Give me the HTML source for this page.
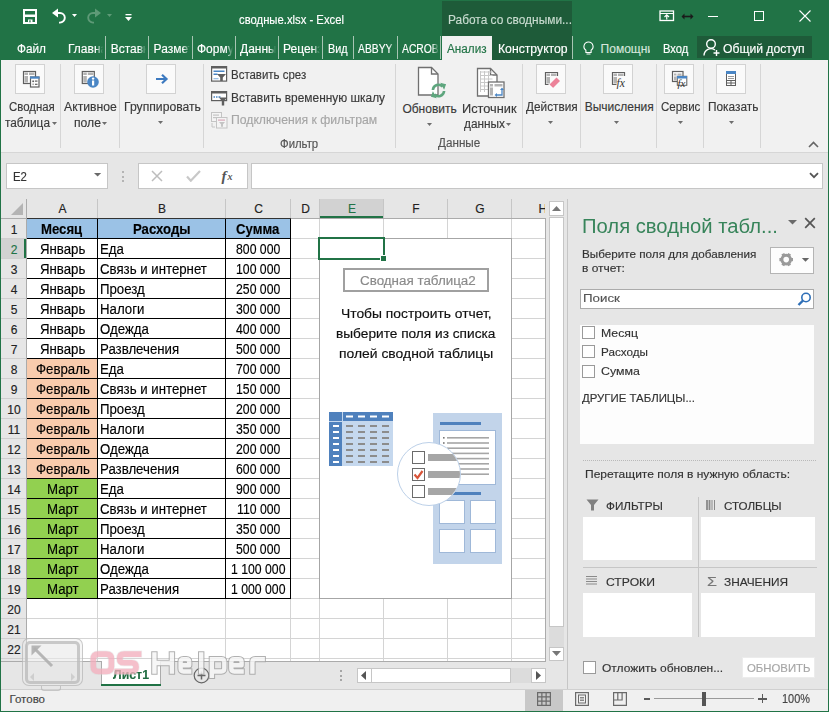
<!DOCTYPE html><html><head><meta charset="utf-8"><style>
html,body{margin:0;padding:0;}
body{width:829px;height:712px;position:relative;overflow:hidden;background:#217346;font-family:"Liberation Sans",sans-serif;}
.a{position:absolute;}
.t{position:absolute;white-space:pre;-webkit-text-stroke:0.15px currentColor;}
</style></head><body>

<div class="a" style="left:442px;top:1px;width:130px;height:59px;background:#1e5b39;"></div>
<svg class="a" style="left:22px;top:8px;" width="16" height="16" viewBox="0 0 16 16"><path d="M2 2h12v13H2z" fill="none" stroke="#fff" stroke-width="2"/><rect x="2" y="6.5" width="12" height="2.5" fill="#fff"/><rect x="6" y="11.5" width="4.5" height="3.5" fill="#fff"/><rect x="7.3" y="12.3" width="1.3" height="2" fill="#217346"/></svg>
<svg class="a" style="left:51px;top:8px;" width="28" height="16" viewBox="0 0 28 16"><path d="M1 5l6-4.5v9z" fill="#fff"/><path d="M6 5h3a4.8 4.8 0 0 1 0 9.6H8" fill="none" stroke="#fff" stroke-width="1.9"/><path d="M21 6h5l-2.5 3z" fill="#fff"/></svg>
<svg class="a" style="left:86px;top:8px;" width="28" height="16" viewBox="0 0 28 16"><path d="M15 5l-6-4.5v9z" fill="#5e9a77"/><path d="M10 5H7a4.8 4.8 0 0 0 0 9.6h1" fill="none" stroke="#5e9a77" stroke-width="1.9"/><path d="M21 6h5l-2.5 3z" fill="#5e9a77"/></svg>
<svg class="a" style="left:124px;top:13px;" width="9" height="9" viewBox="0 0 9 9"><rect x="1.5" y="1" width="6" height="1.3" fill="#fff"/><path d="M1 4h7l-3.5 4z" fill="#fff"/></svg>
<div class="t" style="left:239.00px;top:13.84px;font-size:12px;line-height:12px;color:#fff;transform:scaleX(0.9406);transform-origin:0 0;">сводные.xlsx - Excel</div>
<div class="t" style="left:447.80px;top:13.84px;font-size:12px;line-height:12px;color:#c9dcd0;transform:scaleX(0.9922);transform-origin:0 0;">Работа со сводными...</div>
<svg class="a" style="left:659px;top:10px;" width="16" height="12" viewBox="0 0 16 12"><rect x="1" y="1" width="13.5" height="9.5" fill="none" stroke="#fff" stroke-width="1.3"/><path d="M1 3.5h13.5" stroke="#fff" stroke-width="1"/><path d="M7.75 9.5V5M5.5 7l2.25-2.25L10 7" fill="none" stroke="#fff" stroke-width="1.2"/></svg>
<svg class="a" style="left:681px;top:12px;" width="13" height="9" viewBox="0 0 13 9"><path d="M2 4.5h9" stroke="#1a1a1a" stroke-width="1.6"/><path d="M0.5 4.5l3-3v6zM12.5 4.5l-3-3v6z" fill="#1a1a1a"/></svg>
<div class="a" style="left:708px;top:16px;width:10px;height:1px;background:#fff;"></div>
<div class="a" style="left:754px;top:11px;width:10px;height:10px;box-sizing:border-box;border:1px solid #fff;"></div>
<svg class="a" style="left:799px;top:10px;" width="12" height="12" viewBox="0 0 12 12"><path d="M0.5 0.5l11 11M11.5 0.5l-11 11" stroke="#fff" stroke-width="1.1"/></svg>
<div class="a" style="left:105px;top:36px;width:1px;height:23px;background:#a7c5b3;"></div>
<div class="a" style="left:148px;top:36px;width:1px;height:23px;background:#a7c5b3;"></div>
<div class="a" style="left:192px;top:36px;width:1px;height:23px;background:#a7c5b3;"></div>
<div class="a" style="left:235px;top:36px;width:1px;height:23px;background:#a7c5b3;"></div>
<div class="a" style="left:278px;top:36px;width:1px;height:23px;background:#a7c5b3;"></div>
<div class="a" style="left:322px;top:36px;width:1px;height:23px;background:#a7c5b3;"></div>
<div class="a" style="left:353px;top:36px;width:1px;height:23px;background:#a7c5b3;"></div>
<div class="a" style="left:397px;top:36px;width:1px;height:23px;background:#a7c5b3;"></div>
<div class="a" style="left:440px;top:36px;width:1px;height:23px;background:#a7c5b3;"></div>
<div class="a" style="left:572px;top:36px;width:1px;height:23px;background:#a7c5b3;"></div>
<div class="a" style="left:442px;top:36px;width:50px;height:24px;background:#f1f1f1;"></div>
<div class="a" style="left:697px;top:36px;width:115px;height:22px;background:#1e5b39;"></div>
<div class="t" style="left:16.50px;top:42.84px;font-size:12px;line-height:12px;color:#fff;transform:scaleX(0.9812);transform-origin:0 0;">Файл</div>
<div class="a" style="left:67px;top:0;width:36px;height:712px;overflow:hidden;-webkit-mask-image:linear-gradient(90deg,#000 calc(100% - 7px),transparent)"><div class="t" style="left:1.00px;top:42.84px;font-size:12px;line-height:12px;color:#fff;">Главная</div></div>
<div class="a" style="left:109.7px;top:0;width:36.3px;height:712px;overflow:hidden;-webkit-mask-image:linear-gradient(90deg,#000 calc(100% - 7px),transparent)"><div class="t" style="left:1.00px;top:42.84px;font-size:12px;line-height:12px;color:#fff;">Вставка</div></div>
<div class="a" style="left:152.6px;top:0;width:37.400000000000006px;height:712px;overflow:hidden;-webkit-mask-image:linear-gradient(90deg,#000 calc(100% - 7px),transparent)"><div class="t" style="left:1.00px;top:42.84px;font-size:12px;line-height:12px;color:#fff;">Разметка</div></div>
<div class="a" style="left:196px;top:0;width:37px;height:712px;overflow:hidden;-webkit-mask-image:linear-gradient(90deg,#000 calc(100% - 7px),transparent)"><div class="t" style="left:1.00px;top:42.84px;font-size:12px;line-height:12px;color:#fff;">Формулы</div></div>
<div class="a" style="left:239px;top:0;width:37px;height:712px;overflow:hidden;-webkit-mask-image:linear-gradient(90deg,#000 calc(100% - 7px),transparent)"><div class="t" style="left:1.00px;top:42.84px;font-size:12px;line-height:12px;color:#fff;">Данные</div></div>
<div class="a" style="left:282px;top:0;width:38px;height:712px;overflow:hidden;-webkit-mask-image:linear-gradient(90deg,#000 calc(100% - 7px),transparent)"><div class="t" style="left:1.00px;top:42.84px;font-size:12px;line-height:12px;color:#fff;">Рецензирование</div></div>
<div class="t" style="left:328.20px;top:42.84px;font-size:12px;line-height:12px;color:#fff;transform:scaleX(0.9006);transform-origin:0 0;">Вид</div>
<div class="a" style="left:357px;top:0;width:39px;height:712px;overflow:hidden;-webkit-mask-image:linear-gradient(90deg,#000 calc(100% - 7px),transparent)"><div class="t" style="left:1.00px;top:42.84px;font-size:12px;line-height:12px;color:#fff;transform:scaleX(0.8600);transform-origin:0 0;">ABBYY FineReader</div></div>
<div class="a" style="left:401px;top:0;width:38px;height:712px;overflow:hidden;-webkit-mask-image:linear-gradient(90deg,#000 calc(100% - 7px),transparent)"><div class="t" style="left:1.00px;top:42.84px;font-size:12px;line-height:12px;color:#fff;transform:scaleX(0.8600);transform-origin:0 0;">ACROBAT</div></div>
<div class="t" style="left:447.00px;top:42.84px;font-size:12px;line-height:12px;color:#217346;transform:scaleX(0.9764);transform-origin:0 0;">Анализ</div>
<div class="t" style="left:497.70px;top:42.84px;font-size:12px;line-height:12px;color:#fff;transform:scaleX(1.0181);transform-origin:0 0;">Конструктор</div>
<svg class="a" style="left:582px;top:41px;" width="13" height="14" viewBox="0 0 13 14"><path d="M6.5 1a4.5 4.5 0 0 0-2.6 8.2v2.3h5.2V9.2A4.5 4.5 0 0 0 6.5 1z" fill="none" stroke="#fff" stroke-width="1.1"/><path d="M4.5 13h4" stroke="#fff" stroke-width="1"/></svg>
<div class="a" style="left:599px;top:0;width:51px;height:712px;overflow:hidden;"><div class="t" style="left:1.60px;top:42.84px;font-size:12px;line-height:12px;color:#d5e5db;">Помощник</div></div>
<div class="t" style="left:662.80px;top:42.84px;font-size:12px;line-height:12px;color:#fff;transform:scaleX(0.9339);transform-origin:0 0;">Вход</div>
<svg class="a" style="left:703px;top:38px;" width="18" height="19" viewBox="0 0 18 19"><circle cx="8" cy="6" r="4.3" fill="none" stroke="#fff" stroke-width="1.4"/><path d="M1 17.5a7 7 0 0 1 11-5.5" fill="none" stroke="#fff" stroke-width="1.4"/><path d="M13.5 12v6M10.5 15h6" stroke="#fff" stroke-width="1.4"/></svg>
<div class="t" style="left:723.00px;top:42.84px;font-size:12px;line-height:12px;color:#fff;transform:scaleX(1.0128);transform-origin:0 0;">Общий доступ</div>
<div class="a" style="left:1px;top:60px;width:827px;height:92px;background:#f1f1f1;"></div>
<div class="a" style="left:1px;top:152px;width:827px;height:1px;background:#d6d6d6;"></div>
<div class="a" style="left:60px;top:64px;width:1px;height:84px;background:#d6d6d6;"></div>
<div class="a" style="left:119px;top:64px;width:1px;height:84px;background:#d6d6d6;"></div>
<div class="a" style="left:203px;top:64px;width:1px;height:84px;background:#d6d6d6;"></div>
<div class="a" style="left:395px;top:64px;width:1px;height:84px;background:#d6d6d6;"></div>
<div class="a" style="left:522px;top:64px;width:1px;height:84px;background:#d6d6d6;"></div>
<div class="a" style="left:580px;top:64px;width:1px;height:84px;background:#d6d6d6;"></div>
<div class="a" style="left:656px;top:64px;width:1px;height:84px;background:#d6d6d6;"></div>
<div class="a" style="left:703px;top:64px;width:1px;height:84px;background:#d6d6d6;"></div>
<div class="a" style="left:760px;top:64px;width:1px;height:84px;background:#d6d6d6;"></div>
<div class="a" style="left:15px;top:64px;width:30px;height:30px;background:#fafafa;box-sizing:border-box;border:1px solid #d2d2d2;"></div>
<div class="a" style="left:74px;top:64px;width:30px;height:30px;background:#fafafa;box-sizing:border-box;border:1px solid #d2d2d2;"></div>
<div class="a" style="left:146px;top:64px;width:30px;height:30px;background:#fafafa;box-sizing:border-box;border:1px solid #d2d2d2;"></div>
<div class="a" style="left:536px;top:64px;width:30px;height:30px;background:#fafafa;box-sizing:border-box;border:1px solid #d2d2d2;"></div>
<div class="a" style="left:603px;top:64px;width:30px;height:30px;background:#fafafa;box-sizing:border-box;border:1px solid #d2d2d2;"></div>
<div class="a" style="left:664px;top:64px;width:30px;height:30px;background:#fafafa;box-sizing:border-box;border:1px solid #d2d2d2;"></div>
<div class="a" style="left:716px;top:64px;width:30px;height:30px;background:#fafafa;box-sizing:border-box;border:1px solid #d2d2d2;"></div>
<div class="t" style="left:8.90px;top:101.04px;font-size:12px;line-height:12px;color:#3a3a3a;transform:scaleX(0.9509);transform-origin:0 0;">Сводная</div>
<div class="t" style="left:4.60px;top:116.54px;font-size:12px;line-height:12px;color:#3a3a3a;transform:scaleX(0.9854);transform-origin:0 0;">таблица</div>
<div class="t" style="left:64.10px;top:101.04px;font-size:12px;line-height:12px;color:#3a3a3a;transform:scaleX(1.0178);transform-origin:0 0;">Активное</div>
<div class="t" style="left:73.50px;top:116.54px;font-size:12px;line-height:12px;color:#3a3a3a;transform:scaleX(1.0138);transform-origin:0 0;">поле</div>
<div class="t" style="left:123.60px;top:101.04px;font-size:12px;line-height:12px;color:#3a3a3a;transform:scaleX(1.0151);transform-origin:0 0;">Группировать</div>
<div class="t" style="left:230.50px;top:68.74px;font-size:12px;line-height:12px;color:#3a3a3a;transform:scaleX(0.9551);transform-origin:0 0;">Вставить срез</div>
<div class="t" style="left:230.50px;top:92.04px;font-size:12px;line-height:12px;color:#3a3a3a;transform:scaleX(0.9923);transform-origin:0 0;">Вставить временную шкалу</div>
<div class="t" style="left:230.50px;top:114.34px;font-size:12px;line-height:12px;color:#a6a6a6;transform:scaleX(1.0162);transform-origin:0 0;">Подключения к фильтрам</div>
<div class="t" style="left:279.60px;top:137.74px;font-size:12px;line-height:12px;color:#555;transform:scaleX(0.9466);transform-origin:0 0;">Фильтр</div>
<div class="t" style="left:402.40px;top:102.84px;font-size:12px;line-height:12px;color:#3a3a3a;">Обновить</div>
<div class="t" style="left:461.80px;top:102.84px;font-size:12px;line-height:12px;color:#3a3a3a;transform:scaleX(1.0649);transform-origin:0 0;">Источник</div>
<div class="t" style="left:463.70px;top:118.24px;font-size:12px;line-height:12px;color:#3a3a3a;transform:scaleX(0.9879);transform-origin:0 0;">данных</div>
<div class="t" style="left:438.30px;top:137.44px;font-size:12px;line-height:12px;color:#555;transform:scaleX(0.9746);transform-origin:0 0;">Данные</div>
<div class="t" style="left:526.00px;top:100.84px;font-size:12px;line-height:12px;color:#3a3a3a;transform:scaleX(0.9825);transform-origin:0 0;">Действия</div>
<div class="t" style="left:584.70px;top:100.84px;font-size:12px;line-height:12px;color:#3a3a3a;">Вычисления</div>
<div class="t" style="left:660.60px;top:100.84px;font-size:12px;line-height:12px;color:#3a3a3a;transform:scaleX(0.9578);transform-origin:0 0;">Сервис</div>
<div class="t" style="left:707.50px;top:100.84px;font-size:12px;line-height:12px;color:#3a3a3a;transform:scaleX(0.9871);transform-origin:0 0;">Показать</div>
<svg class="a" style="left:52px;top:121.5px;" width="6" height="4" viewBox="0 0 6 4"><path d="M0 0h5l-2.5 3z" fill="#6d6d6d"/></svg>
<svg class="a" style="left:102px;top:121.5px;" width="6" height="4" viewBox="0 0 6 4"><path d="M0 0h5l-2.5 3z" fill="#6d6d6d"/></svg>
<svg class="a" style="left:158px;top:121px;" width="6" height="4" viewBox="0 0 6 4"><path d="M0 0h5l-2.5 3z" fill="#6d6d6d"/></svg>
<svg class="a" style="left:427px;top:123px;" width="6" height="4" viewBox="0 0 6 4"><path d="M0 0h5l-2.5 3z" fill="#6d6d6d"/></svg>
<svg class="a" style="left:506px;top:123px;" width="6" height="4" viewBox="0 0 6 4"><path d="M0 0h5l-2.5 3z" fill="#6d6d6d"/></svg>
<svg class="a" style="left:548px;top:120.5px;" width="6" height="4" viewBox="0 0 6 4"><path d="M0 0h5l-2.5 3z" fill="#6d6d6d"/></svg>
<svg class="a" style="left:614px;top:120.5px;" width="6" height="4" viewBox="0 0 6 4"><path d="M0 0h5l-2.5 3z" fill="#6d6d6d"/></svg>
<svg class="a" style="left:678px;top:120.5px;" width="6" height="4" viewBox="0 0 6 4"><path d="M0 0h5l-2.5 3z" fill="#6d6d6d"/></svg>
<svg class="a" style="left:729px;top:120.5px;" width="6" height="4" viewBox="0 0 6 4"><path d="M0 0h5l-2.5 3z" fill="#6d6d6d"/></svg>
<svg class="a" style="left:808px;top:141px;" width="11" height="7" viewBox="0 0 11 7"><path d="M1 6l4.5-4.5L10 6" fill="none" stroke="#666" stroke-width="1.6"/></svg>
<div class="a" style="left:1px;top:153px;width:827px;height:46px;background:#e6e6e6;"></div>
<div class="a" style="left:6px;top:163px;width:102px;height:26px;background:#fff;box-sizing:border-box;border:1px solid #c6c6c6;"></div>
<div class="t" style="left:12.50px;top:170.84px;font-size:12px;line-height:12px;color:#333;transform:scaleX(0.9505);transform-origin:0 0;">E2</div>
<svg class="a" style="left:94px;top:173px;" width="8" height="4" viewBox="0 0 8 4"><path d="M0 0h7.2l-3.6 3.6z" fill="#6a6a6a"/></svg>
<div class="a" style="left:122px;top:171px;width:2px;height:2px;background:#b4b4b4;"></div>
<div class="a" style="left:122px;top:175.5px;width:2px;height:2px;background:#b4b4b4;"></div>
<div class="a" style="left:122px;top:180px;width:2px;height:2px;background:#b4b4b4;"></div>
<div class="a" style="left:138px;top:163px;width:110px;height:26px;background:#fff;box-sizing:border-box;border:1px solid #c6c6c6;"></div>
<svg class="a" style="left:151px;top:170px;" width="12" height="12" viewBox="0 0 12 12"><path d="M1 1l10 10M11 1L1 11" stroke="#bdbdbd" stroke-width="1.5"/></svg>
<svg class="a" style="left:186px;top:170px;" width="15" height="12" viewBox="0 0 15 12"><path d="M1 6.5l3.8 4.2L14 1" fill="none" stroke="#c8c8c8" stroke-width="2.2"/></svg>
<svg class="a" style="left:220px;top:167px;" width="18" height="17" viewBox="0 0 18 17"><text x="1.5" y="13.5" font-family="Liberation Serif" font-style="italic" font-weight="bold" font-size="15" fill="#555">f</text><text x="7.5" y="12.5" font-family="Liberation Serif" font-style="italic" font-weight="bold" font-size="10" fill="#555">x</text></svg>
<div class="a" style="left:251px;top:163px;width:572px;height:26px;background:#fff;box-sizing:border-box;border:1px solid #c6c6c6;"></div>
<svg class="a" style="left:809px;top:172px;" width="10" height="7" viewBox="0 0 10 7"><path d="M1 1.2l4 4L9 1.2" fill="none" stroke="#555" stroke-width="1.8"/></svg>
<div class="a" style="left:1px;top:199px;width:545px;height:462px;background:#fff;"></div>
<div class="a" style="left:1px;top:199px;width:545px;height:19px;background:#e6e6e6;"></div>
<div class="a" style="left:1px;top:219px;width:25px;height:442px;background:#e6e6e6;"></div>
<div class="a" style="left:1px;top:239px;width:25px;height:19px;background:#d2d2d2;"></div>
<div class="a" style="left:24px;top:239px;width:2px;height:19px;background:#217346;"></div>
<div class="a" style="left:1px;top:218px;width:545px;height:1px;background:#ababab;"></div>
<div class="a" style="left:26px;top:199px;width:1px;height:462px;background:#ababab;"></div>
<svg class="a" style="left:11px;top:203px;" width="12" height="12" viewBox="0 0 12 12"><path d="M12 0v12H0z" fill="#b4b4b4"/></svg>
<div class="a" style="left:320px;top:199px;width:63px;height:19px;background:#d2d2d2;"></div>
<div class="a" style="left:320px;top:216px;width:63px;height:2px;background:#217346;"></div>
<div class="a" style="left:97px;top:199px;width:1px;height:19px;background:#c6c6c6;"></div>
<div class="a" style="left:225px;top:199px;width:1px;height:19px;background:#c6c6c6;"></div>
<div class="a" style="left:290px;top:199px;width:1px;height:19px;background:#c6c6c6;"></div>
<div class="a" style="left:319px;top:199px;width:1px;height:19px;background:#c6c6c6;"></div>
<div class="a" style="left:383px;top:199px;width:1px;height:19px;background:#c6c6c6;"></div>
<div class="a" style="left:447px;top:199px;width:1px;height:19px;background:#c6c6c6;"></div>
<div class="a" style="left:511px;top:199px;width:1px;height:19px;background:#c6c6c6;"></div>
<div class="t" style="left:58.49px;top:202.84px;font-size:12px;line-height:12px;color:#222;">A</div>
<div class="t" style="left:157.99px;top:202.84px;font-size:12px;line-height:12px;color:#222;">B</div>
<div class="t" style="left:254.16px;top:202.84px;font-size:12px;line-height:12px;color:#222;">C</div>
<div class="t" style="left:301.16px;top:202.84px;font-size:12px;line-height:12px;color:#222;">D</div>
<div class="t" style="left:347.99px;top:202.84px;font-size:12px;line-height:12px;color:#217346;">E</div>
<div class="t" style="left:412.33px;top:202.84px;font-size:12px;line-height:12px;color:#222;">F</div>
<div class="t" style="left:475.33px;top:202.84px;font-size:12px;line-height:12px;color:#222;">G</div>
<div class="a" style="left:512px;top:0;width:33px;height:712px;overflow:hidden;"><div class="t" style="left:26.50px;top:202.84px;font-size:12px;line-height:12px;color:#222;">H</div></div>
<div class="a" style="left:97px;top:219px;width:1px;height:442px;background:#d4d4d4;"></div>
<div class="a" style="left:225px;top:219px;width:1px;height:442px;background:#d4d4d4;"></div>
<div class="a" style="left:290px;top:219px;width:1px;height:442px;background:#d4d4d4;"></div>
<div class="a" style="left:319px;top:219px;width:1px;height:442px;background:#d4d4d4;"></div>
<div class="a" style="left:383px;top:219px;width:1px;height:442px;background:#d4d4d4;"></div>
<div class="a" style="left:447px;top:219px;width:1px;height:442px;background:#d4d4d4;"></div>
<div class="a" style="left:511px;top:219px;width:1px;height:442px;background:#d4d4d4;"></div>
<div class="a" style="left:27px;top:238px;width:519px;height:1px;background:#d4d4d4;"></div>
<div class="a" style="left:1px;top:238px;width:25px;height:1px;background:#cfcfcf;"></div>
<div class="a" style="left:27px;top:258px;width:519px;height:1px;background:#d4d4d4;"></div>
<div class="a" style="left:1px;top:258px;width:25px;height:1px;background:#cfcfcf;"></div>
<div class="a" style="left:27px;top:278px;width:519px;height:1px;background:#d4d4d4;"></div>
<div class="a" style="left:1px;top:278px;width:25px;height:1px;background:#cfcfcf;"></div>
<div class="a" style="left:27px;top:298px;width:519px;height:1px;background:#d4d4d4;"></div>
<div class="a" style="left:1px;top:298px;width:25px;height:1px;background:#cfcfcf;"></div>
<div class="a" style="left:27px;top:318px;width:519px;height:1px;background:#d4d4d4;"></div>
<div class="a" style="left:1px;top:318px;width:25px;height:1px;background:#cfcfcf;"></div>
<div class="a" style="left:27px;top:338px;width:519px;height:1px;background:#d4d4d4;"></div>
<div class="a" style="left:1px;top:338px;width:25px;height:1px;background:#cfcfcf;"></div>
<div class="a" style="left:27px;top:358px;width:519px;height:1px;background:#d4d4d4;"></div>
<div class="a" style="left:1px;top:358px;width:25px;height:1px;background:#cfcfcf;"></div>
<div class="a" style="left:27px;top:378px;width:519px;height:1px;background:#d4d4d4;"></div>
<div class="a" style="left:1px;top:378px;width:25px;height:1px;background:#cfcfcf;"></div>
<div class="a" style="left:27px;top:398px;width:519px;height:1px;background:#d4d4d4;"></div>
<div class="a" style="left:1px;top:398px;width:25px;height:1px;background:#cfcfcf;"></div>
<div class="a" style="left:27px;top:418px;width:519px;height:1px;background:#d4d4d4;"></div>
<div class="a" style="left:1px;top:418px;width:25px;height:1px;background:#cfcfcf;"></div>
<div class="a" style="left:27px;top:438px;width:519px;height:1px;background:#d4d4d4;"></div>
<div class="a" style="left:1px;top:438px;width:25px;height:1px;background:#cfcfcf;"></div>
<div class="a" style="left:27px;top:458px;width:519px;height:1px;background:#d4d4d4;"></div>
<div class="a" style="left:1px;top:458px;width:25px;height:1px;background:#cfcfcf;"></div>
<div class="a" style="left:27px;top:478px;width:519px;height:1px;background:#d4d4d4;"></div>
<div class="a" style="left:1px;top:478px;width:25px;height:1px;background:#cfcfcf;"></div>
<div class="a" style="left:27px;top:498px;width:519px;height:1px;background:#d4d4d4;"></div>
<div class="a" style="left:1px;top:498px;width:25px;height:1px;background:#cfcfcf;"></div>
<div class="a" style="left:27px;top:518px;width:519px;height:1px;background:#d4d4d4;"></div>
<div class="a" style="left:1px;top:518px;width:25px;height:1px;background:#cfcfcf;"></div>
<div class="a" style="left:27px;top:538px;width:519px;height:1px;background:#d4d4d4;"></div>
<div class="a" style="left:1px;top:538px;width:25px;height:1px;background:#cfcfcf;"></div>
<div class="a" style="left:27px;top:558px;width:519px;height:1px;background:#d4d4d4;"></div>
<div class="a" style="left:1px;top:558px;width:25px;height:1px;background:#cfcfcf;"></div>
<div class="a" style="left:27px;top:578px;width:519px;height:1px;background:#d4d4d4;"></div>
<div class="a" style="left:1px;top:578px;width:25px;height:1px;background:#cfcfcf;"></div>
<div class="a" style="left:27px;top:598px;width:519px;height:1px;background:#d4d4d4;"></div>
<div class="a" style="left:1px;top:598px;width:25px;height:1px;background:#cfcfcf;"></div>
<div class="a" style="left:27px;top:618px;width:519px;height:1px;background:#d4d4d4;"></div>
<div class="a" style="left:1px;top:618px;width:25px;height:1px;background:#cfcfcf;"></div>
<div class="a" style="left:27px;top:638px;width:519px;height:1px;background:#d4d4d4;"></div>
<div class="a" style="left:1px;top:638px;width:25px;height:1px;background:#cfcfcf;"></div>
<div class="a" style="left:27px;top:658px;width:519px;height:1px;background:#d4d4d4;"></div>
<div class="a" style="left:1px;top:658px;width:25px;height:1px;background:#cfcfcf;"></div>
<div class="t" style="left:10.66px;top:223.54px;font-size:12px;line-height:12px;color:#222;">1</div>
<div class="t" style="left:10.66px;top:243.54px;font-size:12px;line-height:12px;color:#217346;">2</div>
<div class="t" style="left:10.66px;top:263.54px;font-size:12px;line-height:12px;color:#222;">3</div>
<div class="t" style="left:10.66px;top:283.54px;font-size:12px;line-height:12px;color:#222;">4</div>
<div class="t" style="left:10.66px;top:303.54px;font-size:12px;line-height:12px;color:#222;">5</div>
<div class="t" style="left:10.66px;top:323.54px;font-size:12px;line-height:12px;color:#222;">6</div>
<div class="t" style="left:10.66px;top:343.54px;font-size:12px;line-height:12px;color:#222;">7</div>
<div class="t" style="left:10.66px;top:363.54px;font-size:12px;line-height:12px;color:#222;">8</div>
<div class="t" style="left:10.66px;top:383.54px;font-size:12px;line-height:12px;color:#222;">9</div>
<div class="t" style="left:7.32px;top:403.54px;font-size:12px;line-height:12px;color:#222;">10</div>
<div class="t" style="left:7.77px;top:423.54px;font-size:12px;line-height:12px;color:#222;">11</div>
<div class="t" style="left:7.32px;top:443.54px;font-size:12px;line-height:12px;color:#222;">12</div>
<div class="t" style="left:7.32px;top:463.54px;font-size:12px;line-height:12px;color:#222;">13</div>
<div class="t" style="left:7.32px;top:483.54px;font-size:12px;line-height:12px;color:#222;">14</div>
<div class="t" style="left:7.32px;top:503.54px;font-size:12px;line-height:12px;color:#222;">15</div>
<div class="t" style="left:7.32px;top:523.54px;font-size:12px;line-height:12px;color:#222;">16</div>
<div class="t" style="left:7.32px;top:543.54px;font-size:12px;line-height:12px;color:#222;">17</div>
<div class="t" style="left:7.32px;top:563.54px;font-size:12px;line-height:12px;color:#222;">18</div>
<div class="t" style="left:7.32px;top:583.54px;font-size:12px;line-height:12px;color:#222;">19</div>
<div class="t" style="left:7.32px;top:603.54px;font-size:12px;line-height:12px;color:#222;">20</div>
<div class="t" style="left:7.32px;top:623.54px;font-size:12px;line-height:12px;color:#222;">21</div>
<div class="t" style="left:7.32px;top:643.54px;font-size:12px;line-height:12px;color:#222;">22</div>
<div class="a" style="left:27px;top:219px;width:263px;height:19px;background:#9bc2e6;"></div>
<div class="a" style="left:27px;top:359px;width:70px;height:19px;background:#f8cbad;"></div>
<div class="a" style="left:27px;top:379px;width:70px;height:19px;background:#f8cbad;"></div>
<div class="a" style="left:27px;top:399px;width:70px;height:19px;background:#f8cbad;"></div>
<div class="a" style="left:27px;top:419px;width:70px;height:19px;background:#f8cbad;"></div>
<div class="a" style="left:27px;top:439px;width:70px;height:19px;background:#f8cbad;"></div>
<div class="a" style="left:27px;top:459px;width:70px;height:19px;background:#f8cbad;"></div>
<div class="a" style="left:27px;top:479px;width:70px;height:19px;background:#92d050;"></div>
<div class="a" style="left:27px;top:499px;width:70px;height:19px;background:#92d050;"></div>
<div class="a" style="left:27px;top:519px;width:70px;height:19px;background:#92d050;"></div>
<div class="a" style="left:27px;top:539px;width:70px;height:19px;background:#92d050;"></div>
<div class="a" style="left:27px;top:559px;width:70px;height:19px;background:#92d050;"></div>
<div class="a" style="left:27px;top:579px;width:70px;height:19px;background:#92d050;"></div>
<div class="a" style="left:97px;top:218px;width:1px;height:381px;background:#000;"></div>
<div class="a" style="left:225px;top:218px;width:1px;height:381px;background:#000;"></div>
<div class="a" style="left:290px;top:218px;width:1px;height:381px;background:#000;"></div>
<div class="a" style="left:27px;top:238px;width:264px;height:1px;background:#000;"></div>
<div class="a" style="left:27px;top:258px;width:264px;height:1px;background:#000;"></div>
<div class="a" style="left:27px;top:278px;width:264px;height:1px;background:#000;"></div>
<div class="a" style="left:27px;top:298px;width:264px;height:1px;background:#000;"></div>
<div class="a" style="left:27px;top:318px;width:264px;height:1px;background:#000;"></div>
<div class="a" style="left:27px;top:338px;width:264px;height:1px;background:#000;"></div>
<div class="a" style="left:27px;top:358px;width:264px;height:1px;background:#000;"></div>
<div class="a" style="left:27px;top:378px;width:264px;height:1px;background:#000;"></div>
<div class="a" style="left:27px;top:398px;width:264px;height:1px;background:#000;"></div>
<div class="a" style="left:27px;top:418px;width:264px;height:1px;background:#000;"></div>
<div class="a" style="left:27px;top:438px;width:264px;height:1px;background:#000;"></div>
<div class="a" style="left:27px;top:458px;width:264px;height:1px;background:#000;"></div>
<div class="a" style="left:27px;top:478px;width:264px;height:1px;background:#000;"></div>
<div class="a" style="left:27px;top:498px;width:264px;height:1px;background:#000;"></div>
<div class="a" style="left:27px;top:518px;width:264px;height:1px;background:#000;"></div>
<div class="a" style="left:27px;top:538px;width:264px;height:1px;background:#000;"></div>
<div class="a" style="left:27px;top:558px;width:264px;height:1px;background:#000;"></div>
<div class="a" style="left:27px;top:578px;width:264px;height:1px;background:#000;"></div>
<div class="a" style="left:27px;top:598px;width:264px;height:1px;background:#000;"></div>
<div class="a" style="left:27px;top:218px;width:264px;height:1px;background:#333;"></div>
<div class="t" style="left:41.40px;top:221.85px;font-size:14px;line-height:14px;color:#000;font-weight:700;transform:scaleX(0.9400);transform-origin:0 0;">Месяц</div>
<div class="t" style="left:132.93px;top:221.85px;font-size:14px;line-height:14px;color:#000;font-weight:700;transform:scaleX(0.9400);transform-origin:0 0;">Расходы</div>
<div class="t" style="left:236.37px;top:221.85px;font-size:14px;line-height:14px;color:#000;font-weight:700;transform:scaleX(0.9400);transform-origin:0 0;">Сумма</div>
<div class="t" style="left:39.82px;top:241.85px;font-size:14px;line-height:14px;color:#000;transform:scaleX(0.9450);transform-origin:0 0;">Январь</div>
<div class="t" style="left:99.80px;top:241.85px;font-size:14px;line-height:14px;color:#000;transform:scaleX(0.9450);transform-origin:0 0;">Еда</div>
<div class="t" style="left:236.26px;top:241.85px;font-size:14px;line-height:14px;color:#000;transform:scaleX(0.8750);transform-origin:0 0;">800 000</div>
<div class="t" style="left:39.82px;top:261.85px;font-size:14px;line-height:14px;color:#000;transform:scaleX(0.9450);transform-origin:0 0;">Январь</div>
<div class="t" style="left:99.80px;top:261.85px;font-size:14px;line-height:14px;color:#000;transform:scaleX(0.9450);transform-origin:0 0;">Связь и интернет</div>
<div class="t" style="left:236.26px;top:261.85px;font-size:14px;line-height:14px;color:#000;transform:scaleX(0.8750);transform-origin:0 0;">100 000</div>
<div class="t" style="left:39.82px;top:281.85px;font-size:14px;line-height:14px;color:#000;transform:scaleX(0.9450);transform-origin:0 0;">Январь</div>
<div class="t" style="left:99.80px;top:281.85px;font-size:14px;line-height:14px;color:#000;transform:scaleX(0.9450);transform-origin:0 0;">Проезд</div>
<div class="t" style="left:236.26px;top:281.85px;font-size:14px;line-height:14px;color:#000;transform:scaleX(0.8750);transform-origin:0 0;">250 000</div>
<div class="t" style="left:39.82px;top:301.85px;font-size:14px;line-height:14px;color:#000;transform:scaleX(0.9450);transform-origin:0 0;">Январь</div>
<div class="t" style="left:99.80px;top:301.85px;font-size:14px;line-height:14px;color:#000;transform:scaleX(0.9450);transform-origin:0 0;">Налоги</div>
<div class="t" style="left:236.26px;top:301.85px;font-size:14px;line-height:14px;color:#000;transform:scaleX(0.8750);transform-origin:0 0;">300 000</div>
<div class="t" style="left:39.82px;top:321.85px;font-size:14px;line-height:14px;color:#000;transform:scaleX(0.9450);transform-origin:0 0;">Январь</div>
<div class="t" style="left:99.80px;top:321.85px;font-size:14px;line-height:14px;color:#000;transform:scaleX(0.9450);transform-origin:0 0;">Одежда</div>
<div class="t" style="left:236.26px;top:321.85px;font-size:14px;line-height:14px;color:#000;transform:scaleX(0.8750);transform-origin:0 0;">400 000</div>
<div class="t" style="left:39.82px;top:341.85px;font-size:14px;line-height:14px;color:#000;transform:scaleX(0.9450);transform-origin:0 0;">Январь</div>
<div class="t" style="left:99.80px;top:341.85px;font-size:14px;line-height:14px;color:#000;transform:scaleX(0.9450);transform-origin:0 0;">Развлечения</div>
<div class="t" style="left:236.26px;top:341.85px;font-size:14px;line-height:14px;color:#000;transform:scaleX(0.8750);transform-origin:0 0;">500 000</div>
<div class="t" style="left:35.61px;top:361.85px;font-size:14px;line-height:14px;color:#000;transform:scaleX(0.9450);transform-origin:0 0;">Февраль</div>
<div class="t" style="left:99.80px;top:361.85px;font-size:14px;line-height:14px;color:#000;transform:scaleX(0.9450);transform-origin:0 0;">Еда</div>
<div class="t" style="left:236.26px;top:361.85px;font-size:14px;line-height:14px;color:#000;transform:scaleX(0.8750);transform-origin:0 0;">700 000</div>
<div class="t" style="left:35.61px;top:381.85px;font-size:14px;line-height:14px;color:#000;transform:scaleX(0.9450);transform-origin:0 0;">Февраль</div>
<div class="t" style="left:99.80px;top:381.85px;font-size:14px;line-height:14px;color:#000;transform:scaleX(0.9450);transform-origin:0 0;">Связь и интернет</div>
<div class="t" style="left:236.26px;top:381.85px;font-size:14px;line-height:14px;color:#000;transform:scaleX(0.8750);transform-origin:0 0;">150 000</div>
<div class="t" style="left:35.61px;top:401.85px;font-size:14px;line-height:14px;color:#000;transform:scaleX(0.9450);transform-origin:0 0;">Февраль</div>
<div class="t" style="left:99.80px;top:401.85px;font-size:14px;line-height:14px;color:#000;transform:scaleX(0.9450);transform-origin:0 0;">Проезд</div>
<div class="t" style="left:236.26px;top:401.85px;font-size:14px;line-height:14px;color:#000;transform:scaleX(0.8750);transform-origin:0 0;">200 000</div>
<div class="t" style="left:35.61px;top:421.85px;font-size:14px;line-height:14px;color:#000;transform:scaleX(0.9450);transform-origin:0 0;">Февраль</div>
<div class="t" style="left:99.80px;top:421.85px;font-size:14px;line-height:14px;color:#000;transform:scaleX(0.9450);transform-origin:0 0;">Налоги</div>
<div class="t" style="left:236.26px;top:421.85px;font-size:14px;line-height:14px;color:#000;transform:scaleX(0.8750);transform-origin:0 0;">350 000</div>
<div class="t" style="left:35.61px;top:441.85px;font-size:14px;line-height:14px;color:#000;transform:scaleX(0.9450);transform-origin:0 0;">Февраль</div>
<div class="t" style="left:99.80px;top:441.85px;font-size:14px;line-height:14px;color:#000;transform:scaleX(0.9450);transform-origin:0 0;">Одежда</div>
<div class="t" style="left:236.26px;top:441.85px;font-size:14px;line-height:14px;color:#000;transform:scaleX(0.8750);transform-origin:0 0;">200 000</div>
<div class="t" style="left:35.61px;top:461.85px;font-size:14px;line-height:14px;color:#000;transform:scaleX(0.9450);transform-origin:0 0;">Февраль</div>
<div class="t" style="left:99.80px;top:461.85px;font-size:14px;line-height:14px;color:#000;transform:scaleX(0.9450);transform-origin:0 0;">Развлечения</div>
<div class="t" style="left:236.26px;top:461.85px;font-size:14px;line-height:14px;color:#000;transform:scaleX(0.8750);transform-origin:0 0;">600 000</div>
<div class="t" style="left:46.67px;top:481.85px;font-size:14px;line-height:14px;color:#000;transform:scaleX(0.9450);transform-origin:0 0;">Март</div>
<div class="t" style="left:99.80px;top:481.85px;font-size:14px;line-height:14px;color:#000;transform:scaleX(0.9450);transform-origin:0 0;">Еда</div>
<div class="t" style="left:236.26px;top:481.85px;font-size:14px;line-height:14px;color:#000;transform:scaleX(0.8750);transform-origin:0 0;">900 000</div>
<div class="t" style="left:46.67px;top:501.85px;font-size:14px;line-height:14px;color:#000;transform:scaleX(0.9450);transform-origin:0 0;">Март</div>
<div class="t" style="left:99.80px;top:501.85px;font-size:14px;line-height:14px;color:#000;transform:scaleX(0.9450);transform-origin:0 0;">Связь и интернет</div>
<div class="t" style="left:236.71px;top:501.85px;font-size:14px;line-height:14px;color:#000;transform:scaleX(0.8750);transform-origin:0 0;">110 000</div>
<div class="t" style="left:46.67px;top:521.85px;font-size:14px;line-height:14px;color:#000;transform:scaleX(0.9450);transform-origin:0 0;">Март</div>
<div class="t" style="left:99.80px;top:521.85px;font-size:14px;line-height:14px;color:#000;transform:scaleX(0.9450);transform-origin:0 0;">Проезд</div>
<div class="t" style="left:236.26px;top:521.85px;font-size:14px;line-height:14px;color:#000;transform:scaleX(0.8750);transform-origin:0 0;">350 000</div>
<div class="t" style="left:46.67px;top:541.85px;font-size:14px;line-height:14px;color:#000;transform:scaleX(0.9450);transform-origin:0 0;">Март</div>
<div class="t" style="left:99.80px;top:541.85px;font-size:14px;line-height:14px;color:#000;transform:scaleX(0.9450);transform-origin:0 0;">Налоги</div>
<div class="t" style="left:236.26px;top:541.85px;font-size:14px;line-height:14px;color:#000;transform:scaleX(0.8750);transform-origin:0 0;">500 000</div>
<div class="t" style="left:46.67px;top:561.85px;font-size:14px;line-height:14px;color:#000;transform:scaleX(0.9450);transform-origin:0 0;">Март</div>
<div class="t" style="left:99.80px;top:561.85px;font-size:14px;line-height:14px;color:#000;transform:scaleX(0.9450);transform-origin:0 0;">Одежда</div>
<div class="t" style="left:231.15px;top:561.85px;font-size:14px;line-height:14px;color:#000;transform:scaleX(0.8750);transform-origin:0 0;">1 100 000</div>
<div class="t" style="left:46.67px;top:581.85px;font-size:14px;line-height:14px;color:#000;transform:scaleX(0.9450);transform-origin:0 0;">Март</div>
<div class="t" style="left:99.80px;top:581.85px;font-size:14px;line-height:14px;color:#000;transform:scaleX(0.9450);transform-origin:0 0;">Развлечения</div>
<div class="t" style="left:231.15px;top:581.85px;font-size:14px;line-height:14px;color:#000;transform:scaleX(0.8750);transform-origin:0 0;">1 000 000</div>
<div class="a" style="left:319px;top:238px;width:193px;height:361px;background:#fff;box-sizing:border-box;border:1px solid #a6a6a6;"></div>
<div class="a" style="left:318px;top:237px;width:67px;height:23px;box-sizing:border-box;border:2px solid #217346;"></div>
<div class="a" style="left:381px;top:256px;width:5px;height:5px;background:#217346;outline:1px solid #fff;"></div>
<div class="a" style="left:343px;top:268px;width:146px;height:24px;background:#fff;box-sizing:border-box;border:2px solid #a0a0a0;"></div>
<div class="t" style="left:360.20px;top:274.64px;font-size:12px;line-height:12px;color:#8a8a8a;transform:scaleX(1.1158);transform-origin:0 0;">Сводная таблица2</div>
<div class="t" style="left:341.30px;top:307.84px;font-size:12px;line-height:12px;color:#111;transform:scaleX(1.1535);transform-origin:0 0;">Чтобы построить отчет,</div>
<div class="t" style="left:336.30px;top:328.04px;font-size:12px;line-height:12px;color:#111;transform:scaleX(1.1397);transform-origin:0 0;">выберите поля из списка</div>
<div class="t" style="left:339.30px;top:347.64px;font-size:12px;line-height:12px;color:#111;transform:scaleX(1.1582);transform-origin:0 0;">полей сводной таблицы</div>
<svg class="a" style="left:329px;top:412px;" width="64" height="54" viewBox="0 0 64 54"><rect x="0" y="0" width="64" height="54" fill="#c5d8ee"/><rect x="0" y="0" width="64" height="9" fill="#4f81bd"/><rect x="0" y="0" width="13" height="54" fill="#4f81bd"/><rect x="13" y="0" width="1" height="54" fill="#c5d8ee"/><rect x="0" y="9" width="64" height="1" fill="#c5d8ee"/><rect x="17" y="3.5" width="7" height="2" fill="#fff"/><rect x="29" y="3.5" width="7" height="2" fill="#fff"/><rect x="41" y="3.5" width="7" height="2" fill="#fff"/><rect x="53" y="3.5" width="7" height="2" fill="#fff"/><rect x="4" y="13" width="6" height="2" fill="#fff"/><rect x="17" y="13" width="7" height="2" fill="#8c8c8c"/><rect x="29" y="13" width="7" height="2" fill="#8c8c8c"/><rect x="41" y="13" width="7" height="2" fill="#8c8c8c"/><rect x="53" y="13" width="7" height="2" fill="#8c8c8c"/><rect x="4" y="19" width="6" height="2" fill="#fff"/><rect x="17" y="19" width="7" height="2" fill="#8c8c8c"/><rect x="29" y="19" width="7" height="2" fill="#8c8c8c"/><rect x="41" y="19" width="7" height="2" fill="#8c8c8c"/><rect x="53" y="19" width="7" height="2" fill="#8c8c8c"/><rect x="4" y="25" width="6" height="2" fill="#fff"/><rect x="17" y="25" width="7" height="2" fill="#8c8c8c"/><rect x="29" y="25" width="7" height="2" fill="#8c8c8c"/><rect x="41" y="25" width="7" height="2" fill="#8c8c8c"/><rect x="53" y="25" width="7" height="2" fill="#8c8c8c"/><rect x="4" y="31" width="6" height="2" fill="#fff"/><rect x="17" y="31" width="7" height="2" fill="#8c8c8c"/><rect x="29" y="31" width="7" height="2" fill="#8c8c8c"/><rect x="41" y="31" width="7" height="2" fill="#8c8c8c"/><rect x="53" y="31" width="7" height="2" fill="#8c8c8c"/><rect x="4" y="37" width="6" height="2" fill="#fff"/><rect x="17" y="37" width="7" height="2" fill="#8c8c8c"/><rect x="29" y="37" width="7" height="2" fill="#8c8c8c"/><rect x="41" y="37" width="7" height="2" fill="#8c8c8c"/><rect x="53" y="37" width="7" height="2" fill="#8c8c8c"/><rect x="4" y="43" width="6" height="2" fill="#fff"/><rect x="17" y="43" width="7" height="2" fill="#8c8c8c"/><rect x="29" y="43" width="7" height="2" fill="#8c8c8c"/><rect x="41" y="43" width="7" height="2" fill="#8c8c8c"/><rect x="53" y="43" width="7" height="2" fill="#8c8c8c"/><rect x="4" y="49" width="6" height="2" fill="#fff"/><rect x="17" y="49" width="7" height="2" fill="#8c8c8c"/><rect x="29" y="49" width="7" height="2" fill="#8c8c8c"/><rect x="41" y="49" width="7" height="2" fill="#8c8c8c"/><rect x="53" y="49" width="7" height="2" fill="#8c8c8c"/></svg>
<svg class="a" style="left:433px;top:413px;" width="69" height="151" viewBox="0 0 69 151"><rect x="0" y="0" width="69" height="151" fill="#c2d4ea"/><rect x="7" y="9" width="41" height="3" fill="#4f81bd"/><rect x="6.5" y="17.5" width="56" height="54" fill="#fff" stroke="#9fb8d8" stroke-width="1"/><rect x="14" y="24.0" width="42" height="1.6" fill="#a6a6a6"/><rect x="14" y="29.2" width="42" height="1.6" fill="#a6a6a6"/><rect x="14" y="34.4" width="42" height="1.6" fill="#a6a6a6"/><rect x="14" y="39.6" width="42" height="1.6" fill="#a6a6a6"/><rect x="14" y="44.8" width="42" height="1.6" fill="#a6a6a6"/><rect x="14" y="50.0" width="42" height="1.6" fill="#a6a6a6"/><rect x="14" y="55.2" width="42" height="1.6" fill="#a6a6a6"/><rect x="14" y="60.4" width="42" height="1.6" fill="#a6a6a6"/><rect x="10" y="24" width="1.6" height="1.6" fill="#777"/><rect x="10" y="29.2" width="1.6" height="1.6" fill="#777"/><rect x="7" y="79" width="41" height="3" fill="#4f81bd"/><rect x="6.5" y="87.5" width="25" height="23" fill="#fff" stroke="#9fb8d8" stroke-width="1"/><rect x="37.5" y="87.5" width="25" height="23" fill="#fff" stroke="#9fb8d8" stroke-width="1"/><rect x="6.5" y="116.5" width="25" height="23" fill="#fff" stroke="#9fb8d8" stroke-width="1"/><rect x="37.5" y="116.5" width="25" height="23" fill="#fff" stroke="#9fb8d8" stroke-width="1"/></svg>
<svg class="a" style="left:397px;top:442px;" width="64" height="64" viewBox="0 0 64 64"><circle cx="32" cy="32" r="31.5" fill="#fff" stroke="#bcd0e8" stroke-width="1"/><clipPath id="cc"><circle cx="32" cy="32" r="31"/></clipPath><g clip-path="url(#cc)"><rect x="15.5" y="9.5" width="12" height="12" fill="#fff" stroke="#6b6b6b" stroke-width="1"/><rect x="31" y="12" width="40" height="7" fill="#a6a6a6"/><rect x="15.5" y="26.5" width="12" height="12" fill="#fff" stroke="#6b6b6b" stroke-width="1"/><rect x="31" y="29" width="40" height="7" fill="#a6a6a6"/><rect x="15.5" y="43.5" width="12" height="12" fill="#fff" stroke="#6b6b6b" stroke-width="1"/><rect x="31" y="46" width="40" height="7" fill="#a6a6a6"/><path d="M17.5 32.5l3 3.5 5-7" fill="none" stroke="#d9553a" stroke-width="2.2"/></g></svg>
<div class="a" style="left:546px;top:199px;width:22px;height:462px;background:#e6e6e6;"></div>
<div class="a" style="left:545px;top:219px;width:1px;height:442px;background:#ababab;"></div>
<div class="a" style="left:549px;top:201px;width:15px;height:15px;background:#fff;box-sizing:border-box;border:1px solid #c6c6c6;"></div>
<svg class="a" style="left:552px;top:206px;" width="9" height="5" viewBox="0 0 9 5"><path d="M0 5h9L4.5 0z" fill="#777"/></svg>
<div class="a" style="left:549px;top:217px;width:15px;height:430px;background:#dcdcdc;"></div>
<div class="a" style="left:549px;top:217px;width:15px;height:410px;background:#fff;box-sizing:border-box;border:1px solid #c6c6c6;"></div>
<div class="a" style="left:549px;top:647px;width:15px;height:14px;background:#fff;box-sizing:border-box;border:1px solid #c6c6c6;"></div>
<svg class="a" style="left:552px;top:651px;" width="9" height="5" viewBox="0 0 9 5"><path d="M0 0h9L4.5 5z" fill="#777"/></svg>
<div class="a" style="left:567px;top:199px;width:1px;height:490px;background:#c6c6c6;"></div>
<div class="a" style="left:568px;top:199px;width:260px;height:491px;background:#e6e6e6;"></div>
<div class="t" style="left:581.80px;top:215.67px;font-size:20px;line-height:20px;color:#37845a;transform:scaleX(1.0112);transform-origin:0 0;-webkit-text-stroke:0;">Поля сводной табл...</div>
<svg class="a" style="left:788px;top:220px;" width="10" height="6" viewBox="0 0 10 6"><path d="M0 0h9L4.5 4.5z" fill="#6a6a6a"/></svg>
<svg class="a" style="left:804px;top:217px;" width="12" height="12" viewBox="0 0 12 12"><path d="M1.2 1.2l9.6 9.6M10.8 1.2l-9.6 9.6" stroke="#555" stroke-width="1.7"/></svg>
<div class="t" style="left:581.60px;top:248.02px;font-size:11.5px;line-height:12px;color:#333;transform:scaleX(1.0166);transform-origin:0 0;">Выберите поля для добавления</div>
<div class="t" style="left:581.60px;top:262.42px;font-size:11.5px;line-height:12px;color:#333;transform:scaleX(1.0421);transform-origin:0 0;">в отчет:</div>
<div class="a" style="left:770px;top:247px;width:44px;height:27px;background:#fdfdfd;box-sizing:border-box;border:1px solid #b4b4b4;"></div>
<svg class="a" style="left:778px;top:252px;" width="34" height="16" viewBox="0 0 34 16"><g transform="translate(8.2,7.6)"><circle r="4.3" fill="none" stroke="#9a9a9a" stroke-width="3"/><rect x="-1.6" y="-6.8" width="3.2" height="3" fill="#9a9a9a" transform="rotate(30)"/><rect x="-1.6" y="-6.8" width="3.2" height="3" fill="#9a9a9a" transform="rotate(90)"/><rect x="-1.6" y="-6.8" width="3.2" height="3" fill="#9a9a9a" transform="rotate(150)"/><rect x="-1.6" y="-6.8" width="3.2" height="3" fill="#9a9a9a" transform="rotate(210)"/><rect x="-1.6" y="-6.8" width="3.2" height="3" fill="#9a9a9a" transform="rotate(270)"/><rect x="-1.6" y="-6.8" width="3.2" height="3" fill="#9a9a9a" transform="rotate(330)"/></g><path d="M23.8 6h7.4l-3.7 3.7z" fill="#666"/></svg>
<div class="a" style="left:580px;top:289px;width:234px;height:20px;background:#fff;box-sizing:border-box;border:1px solid #ababab;"></div>
<div class="t" style="left:582.50px;top:291.92px;font-size:11.5px;line-height:12px;color:#555;transform:scaleX(1.1583);transform-origin:0 0;">Поиск</div>
<svg class="a" style="left:797px;top:292px;" width="15" height="14" viewBox="0 0 15 14"><circle cx="9" cy="5.5" r="4.2" fill="none" stroke="#2e6fb7" stroke-width="1.6"/><path d="M6 8.5L1.5 13" stroke="#2e6fb7" stroke-width="2.4"/></svg>
<div class="a" style="left:580px;top:325px;width:234px;height:119px;background:#fdfdfd;"></div>
<div class="a" style="left:582px;top:326px;width:13px;height:13px;background:#fff;box-sizing:border-box;border:1px solid #9a9a9a;"></div>
<div class="t" style="left:601.25px;top:327.22px;font-size:11.5px;line-height:12px;color:#333;transform:scaleX(1.0648);transform-origin:0 0;">Месяц</div>
<div class="a" style="left:582px;top:345px;width:13px;height:13px;background:#fff;box-sizing:border-box;border:1px solid #9a9a9a;"></div>
<div class="t" style="left:601.25px;top:345.97px;font-size:11.5px;line-height:12px;color:#333;transform:scaleX(1.0159);transform-origin:0 0;">Расходы</div>
<div class="a" style="left:582px;top:365px;width:13px;height:13px;background:#fff;box-sizing:border-box;border:1px solid #9a9a9a;"></div>
<div class="t" style="left:601.25px;top:364.72px;font-size:11.5px;line-height:12px;color:#333;transform:scaleX(1.0769);transform-origin:0 0;">Сумма</div>
<div class="t" style="left:581.90px;top:391.92px;font-size:11.5px;line-height:12px;color:#333;transform:scaleX(0.9920);transform-origin:0 0;">ДРУГИЕ ТАБЛИЦЫ...</div>
<div class="a" style="left:583px;top:460px;width:234px;height:1px;background-image:linear-gradient(90deg,#b9b9b9 50%,transparent 50%);background-size:2px 1px;"></div>
<div class="t" style="left:584.70px;top:467.62px;font-size:11.5px;line-height:12px;color:#333;transform:scaleX(1.0435);transform-origin:0 0;">Перетащите поля в нужную область:</div>
<div class="a" style="left:698px;top:497px;width:1px;height:140px;background:#c6c6c6;"></div>
<div class="a" style="left:583px;top:567px;width:234px;height:1px;background:#c6c6c6;"></div>
<div class="a" style="left:583px;top:517px;width:109px;height:43px;background:#fff;"></div>
<div class="a" style="left:701px;top:517px;width:114px;height:43px;background:#fff;"></div>
<div class="a" style="left:583px;top:593px;width:109px;height:44px;background:#fff;"></div>
<div class="a" style="left:701px;top:593px;width:114px;height:44px;background:#fff;"></div>
<svg class="a" style="left:586px;top:499px;" width="13" height="12" viewBox="0 0 13 12"><path d="M0.5 0.5h12L8 6v5.5H5V6z" fill="#808080"/></svg>
<div class="t" style="left:606.00px;top:500.02px;font-size:11.5px;line-height:12px;color:#333;transform:scaleX(1.0196);transform-origin:0 0;">ФИЛЬТРЫ</div>
<svg class="a" style="left:706px;top:500px;" width="10" height="10" viewBox="0 0 10 10"><path d="M1 0v10M3.5 0v10" stroke="#8a8a8a" stroke-width="1.8"/><path d="M6 0v10M8.5 0v10" stroke="#8a8a8a" stroke-width="1"/></svg>
<div class="t" style="left:723.80px;top:500.02px;font-size:11.5px;line-height:12px;color:#333;transform:scaleX(1.0103);transform-origin:0 0;">СТОЛБЦЫ</div>
<svg class="a" style="left:586px;top:576px;" width="12" height="10" viewBox="0 0 12 10"><path d="M0 0.5h11M0 3h11M0 5.5h11M0 8h11" stroke="#8a8a8a" stroke-width="1.2"/></svg>
<div class="t" style="left:606.00px;top:576.02px;font-size:11.5px;line-height:12px;color:#333;transform:scaleX(1.0570);transform-origin:0 0;">СТРОКИ</div>
<div class="t" style="left:707.00px;top:575.84px;font-size:12px;line-height:12px;color:#777;transform:scaleX(1.3420);transform-origin:0 0;">Σ</div>
<div class="t" style="left:723.80px;top:576.02px;font-size:11.5px;line-height:12px;color:#333;transform:scaleX(1.0303);transform-origin:0 0;">ЗНАЧЕНИЯ</div>
<div class="a" style="left:583px;top:661px;width:13px;height:13px;background:#fff;box-sizing:border-box;border:1px solid #9a9a9a;"></div>
<div class="t" style="left:602.40px;top:662.02px;font-size:11.5px;line-height:12px;color:#333;transform:scaleX(1.0426);transform-origin:0 0;">Отложить обновлен...</div>
<div class="a" style="left:742px;top:657px;width:73px;height:21px;background:#fff;box-sizing:border-box;border:1px solid #ececec;"></div>
<div class="t" style="left:746.70px;top:662.02px;font-size:11.5px;line-height:12px;color:#a6a6a6;transform:scaleX(0.9871);transform-origin:0 0;">ОБНОВИТЬ</div>
<div class="a" style="left:1px;top:661px;width:566px;height:29px;background:#e6e6e6;"></div>
<div class="a" style="left:1px;top:661px;width:545px;height:1px;background:#ababab;"></div>
<div class="a" style="left:101px;top:661px;width:60px;height:25px;background:#fff;"></div>
<div class="a" style="left:101px;top:661px;width:1px;height:25px;background:#ababab;"></div>
<div class="a" style="left:160px;top:661px;width:1px;height:25px;background:#ababab;"></div>
<div class="a" style="left:101px;top:684px;width:60px;height:2px;background:#217346;"></div>
<div class="t" style="left:112.80px;top:668.00px;font-size:13px;line-height:13px;color:#1f6b40;font-weight:700;transform:scaleX(0.9496);transform-origin:0 0;">Лист1</div>
<svg class="a" style="left:193px;top:667px;" width="17" height="17" viewBox="0 0 17 17"><circle cx="8.5" cy="8.5" r="7.3" fill="none" stroke="#666" stroke-width="1.2"/><path d="M8.5 4.5v8M4.5 8.5h8" stroke="#666" stroke-width="1.5"/></svg>
<div class="a" style="left:340px;top:670px;width:2px;height:2px;background:#a6a6a6;"></div>
<div class="a" style="left:340px;top:674.5px;width:2px;height:2px;background:#a6a6a6;"></div>
<div class="a" style="left:340px;top:679px;width:2px;height:2px;background:#a6a6a6;"></div>
<div class="a" style="left:357px;top:668px;width:189px;height:15px;background:#dcdcdc;"></div>
<div class="a" style="left:357px;top:668px;width:15px;height:15px;background:#fff;box-sizing:border-box;border:1px solid #c6c6c6;"></div>
<svg class="a" style="left:361px;top:671px;" width="6" height="9" viewBox="0 0 6 9"><path d="M5 0v9L0 4.5z" fill="#555"/></svg>
<div class="a" style="left:371px;top:668px;width:140px;height:15px;background:#fff;box-sizing:border-box;border:1px solid #c6c6c6;"></div>
<div class="a" style="left:531px;top:668px;width:15px;height:15px;background:#fff;box-sizing:border-box;border:1px solid #c6c6c6;"></div>
<svg class="a" style="left:536px;top:671px;" width="6" height="9" viewBox="0 0 6 9"><path d="M0 0v9l5-4.5z" fill="#555"/></svg>
<div class="a" style="left:1px;top:690px;width:827px;height:21px;background:#f0f0f0;"></div>
<div class="a" style="left:1px;top:689px;width:827px;height:1px;background:#d0d0d0;"></div>
<div class="t" style="left:9.50px;top:693.02px;font-size:11.5px;line-height:12px;color:#444;">Готово</div>
<div class="a" style="left:525px;top:690px;width:38px;height:21px;background:#c8c8c8;"></div>
<svg class="a" style="left:537px;top:692px;" width="14" height="14" viewBox="0 0 14 14"><path d="M0.6 0.6h12.8v12.8H0.6z M0.6 4.87h12.8 M0.6 9.13h12.8 M4.87 0.6v12.8 M9.13 0.6v12.8" fill="none" stroke="#6a6a6a" stroke-width="1.2"/></svg>
<svg class="a" style="left:575px;top:692px;" width="14" height="14" viewBox="0 0 14 14"><rect x="0.6" y="0.6" width="12.8" height="12.8" fill="none" stroke="#6a6a6a" stroke-width="1.2"/><rect x="3.5" y="3" width="7" height="8" fill="none" stroke="#6a6a6a" stroke-width="1"/><path d="M5 5.5h4M5 7h4M5 8.5h4" stroke="#6a6a6a" stroke-width="0.8"/></svg>
<svg class="a" style="left:613px;top:692px;" width="14" height="14" viewBox="0 0 14 14"><path d="M0.6 0.6h12.8v12.8H0.6z M0.6 8h8.5v-7.4 M4.8 0.6v7.4" fill="none" stroke="#6a6a6a" stroke-width="1.2"/></svg>
<div class="a" style="left:644px;top:698px;width:6px;height:2px;background:#5a5a5a;"></div>
<div class="a" style="left:654px;top:698px;width:100px;height:1px;background:#9a9a9a;"></div>
<div class="a" style="left:702px;top:692px;width:4px;height:14px;background:#555;"></div>
<div class="a" style="left:758px;top:698px;width:9px;height:1.6px;background:#5a5a5a;"></div>
<div class="a" style="left:761.7px;top:694.3px;width:1.6px;height:9px;background:#5a5a5a;"></div>
<div class="t" style="left:782.00px;top:692.84px;font-size:12px;line-height:12px;color:#444;transform:scaleX(0.9107);transform-origin:0 0;">100%</div>
<svg class="a" style="left:22px;top:70px;" width="18" height="18" viewBox="0 0 18 18"><rect x="1.5" y="1.5" width="12" height="12" fill="#fff" stroke="#5f5f5f" stroke-width="1.2"/><rect x="2.5" y="2.5" width="3.5" height="2.5" fill="#b3b3b3"/><rect x="7" y="2.5" width="5.5" height="2.5" fill="#b3b3b3"/><rect x="2.5" y="6" width="3.5" height="6.5" fill="#b3b3b3"/><rect x="8.5" y="7" width="8.5" height="10" fill="#fff" stroke="#5f5f5f" stroke-width="1.2"/><rect x="8" y="6.5" width="9.5" height="2.2" fill="#4a86c5"/><rect x="10.3" y="10.5" width="1.8" height="1.6" fill="#5f5f5f"/><rect x="13" y="10.5" width="2.5" height="1.2" fill="#5f5f5f"/><rect x="10.3" y="13.5" width="1.8" height="1.6" fill="#b3b3b3"/><rect x="13" y="13.7" width="2.5" height="1.2" fill="#5f5f5f"/></svg>
<svg class="a" style="left:81px;top:70px;" width="20" height="20" viewBox="0 0 20 20"><rect x="1.3" y="1.5" width="12" height="12" fill="#fff" stroke="#5f5f5f" stroke-width="1.2"/><rect x="2.3" y="2.5" width="3.5" height="2.5" fill="#b3b3b3"/><rect x="6.8" y="2.5" width="5.5" height="2.5" fill="#b3b3b3"/><rect x="2.3" y="6" width="3.5" height="6.5" fill="#b3b3b3"/><circle cx="12" cy="12" r="5.8" fill="#4a86c5"/><rect x="11" y="10.5" width="2.2" height="5" fill="#fff"/><circle cx="12.1" cy="8.6" r="1.2" fill="#fff"/></svg>
<svg class="a" style="left:155px;top:73px;" width="14" height="12" viewBox="0 0 14 12"><path d="M1 6h10M7 1.8L11.5 6 7 10.2" fill="none" stroke="#3d7ac0" stroke-width="2.2"/></svg>
<svg class="a" style="left:210px;top:65px;" width="18" height="18" viewBox="0 0 18 18"><rect x="1.6" y="1.6" width="15" height="14.5" fill="#fff" stroke="#5f5f5f" stroke-width="1.2"/><rect x="1" y="1" width="16" height="2.5" fill="#5f5f5f"/><rect x="3.5" y="5.5" width="11" height="1.5" fill="#4a86c5"/><rect x="3.5" y="8.5" width="4" height="1.5" fill="#4a86c5"/><rect x="3.5" y="13" width="5" height="1.3" fill="#9cc0e4"/><path d="M7 9h9l-3.2 3.5v3.5h-2.6v-3.5z" fill="#5f5f5f"/></svg>
<svg class="a" style="left:210px;top:90px;" width="18" height="16" viewBox="0 0 18 16"><rect x="1.6" y="1.6" width="15" height="9" fill="#fff" stroke="#5f5f5f" stroke-width="1.2"/><rect x="1" y="1" width="16" height="2.5" fill="#5f5f5f"/><path d="M3.5 7h1.5M6 7h1.5M8.5 7h2" stroke="#4a86c5" stroke-width="1.5"/><path d="M9 7.5h8l-2.8 3.5v4.5h-2.4v-4.5z" fill="#5f5f5f"/></svg>
<svg class="a" style="left:210px;top:111px;" width="18" height="18" viewBox="0 0 18 18"><rect x="1.5" y="1.5" width="10" height="9" fill="#f4f4f4" stroke="#c4c4c4" stroke-width="1"/><rect x="3" y="3.5" width="6" height="1.2" fill="#c4c4c4"/><rect x="3" y="6" width="6" height="1.2" fill="#c4c4c4"/><rect x="6.5" y="6.5" width="10.5" height="10.5" fill="#f4f4f4" stroke="#c4c4c4" stroke-width="1"/><rect x="8" y="8.5" width="7" height="1.2" fill="#d8a8b8"/><path d="M9 11h6l-2 2.3v2.5h-2v-2.5z" fill="#c4c4c4"/><path d="M2 12v4h3" fill="none" stroke="#c4c4c4" stroke-width="1"/></svg>
<svg class="a" style="left:416px;top:66px;" width="30" height="34" viewBox="0 0 30 34"><path d="M2.5 1.5h13l6.5 6.5v21h-19.5z" fill="#fff" stroke="#707070" stroke-width="1.3"/><path d="M15.5 1.5v6.5h6.5" fill="none" stroke="#707070" stroke-width="1.3"/><g transform="translate(22.5,24.5)"><path d="M-5.6 -0.5A5.6 5.6 0 0 1 4.2 -3.8" fill="none" stroke="#5ea67e" stroke-width="2.6"/><path d="M1.8 -7.8L7.6 -6.2L5.6 -0.8z" fill="#5ea67e"/><path d="M5.6 0.5A5.6 5.6 0 0 1 -4.2 3.8" fill="none" stroke="#5ea67e" stroke-width="2.6"/><path d="M-1.8 7.8L-7.6 6.2L-5.6 0.8z" fill="#5ea67e"/></g></svg>
<svg class="a" style="left:476px;top:67px;" width="30" height="32" viewBox="0 0 30 32"><path d="M1.5 1.5h13l6.5 6.5v21h-19.5z" fill="#fff" stroke="#707070" stroke-width="1.3"/><path d="M14.5 1.5v6.5h6.5" fill="none" stroke="#707070" stroke-width="1.3"/><path d="M4.5 5.0h12" stroke="#c8c8c8" stroke-width="1"/><path d="M4.5 8.5h12" stroke="#c8c8c8" stroke-width="1"/><path d="M4.5 12.0h12" stroke="#c8c8c8" stroke-width="1"/><path d="M4.5 15.5h12" stroke="#c8c8c8" stroke-width="1"/><path d="M4.5 19.0h12" stroke="#c8c8c8" stroke-width="1"/><path d="M4.5 22.5h12" stroke="#c8c8c8" stroke-width="1"/><path d="M4.5 4v21M8.5 4v21M12.5 4v21" stroke="#c8c8c8" stroke-width="1"/><rect x="12.5" y="15" width="15.5" height="15.5" fill="#fff" stroke="#707070" stroke-width="1.3"/><rect x="14" y="17" width="3" height="2.5" fill="#b3b3b3"/><rect x="18.5" y="17" width="8" height="2.5" fill="#b3b3b3"/><rect x="14" y="20.5" width="3" height="8" fill="#b3b3b3"/><path d="M20 28h6v-6" fill="none" stroke="#4a86c5" stroke-width="1.3"/><path d="M18.5 28l2.5-2v4z M26 20.5l-2 2.5h4z" fill="#4a86c5"/></svg>
<svg class="a" style="left:544px;top:71px;" width="18" height="18" viewBox="0 0 18 18"><path d="M13.5 5V1.5H1.5v12h3" fill="none" stroke="#5f5f5f" stroke-width="1.2"/><rect x="2.5" y="2.5" width="3.5" height="2.5" fill="#b3b3b3"/><rect x="7" y="2.5" width="5.5" height="2.5" fill="#b3b3b3"/><rect x="2.5" y="6" width="3.5" height="6.5" fill="#b3b3b3"/><path d="M5.5 13.5L12.5 6.5L16 10L9 17z" fill="#ec8299"/><path d="M5 14l4 3.5" stroke="#fff" stroke-width="0.8"/></svg>
<svg class="a" style="left:611px;top:71px;" width="20" height="18" viewBox="0 0 20 18"><path d="M13.5 5V1.5H1.5v12h4" fill="none" stroke="#5f5f5f" stroke-width="1.2"/><rect x="2.5" y="2.5" width="3.5" height="2.5" fill="#b3b3b3"/><rect x="7" y="2.5" width="5.5" height="2.5" fill="#b3b3b3"/><rect x="2.5" y="6" width="3.5" height="6.5" fill="#b3b3b3"/><text x="5.5" y="15.5" font-family="Liberation Serif" font-style="italic" font-size="11.5" fill="#333">fx</text></svg>
<svg class="a" style="left:671px;top:70px;" width="20" height="19" viewBox="0 0 20 19"><rect x="1.5" y="1.5" width="10.5" height="10" fill="#fff" stroke="#5f5f5f" stroke-width="1.2"/><rect x="3" y="3.5" width="2.5" height="2" fill="#b3b3b3"/><rect x="6.5" y="3.5" width="4" height="2" fill="#b3b3b3"/><rect x="3" y="6.5" width="2.5" height="4" fill="#b3b3b3"/><rect x="6.3" y="6.3" width="9.5" height="9" fill="#fff" stroke="#5f5f5f" stroke-width="1"/><rect x="6" y="6" width="10" height="2.5" fill="#4a86c5"/><text x="6.5" y="16.5" font-family="Liberation Serif" font-style="italic" font-size="11" fill="#333">fx</text></svg>
<svg class="a" style="left:726px;top:71px;" width="11" height="16" viewBox="0 0 11 16"><rect x="0.5" y="0.5" width="9" height="14" fill="#fff" stroke="#5f5f5f" stroke-width="1"/><rect x="0" y="0" width="10" height="3" fill="#4a86c5"/><path d="M2 5.5h6M2 7.5h6" stroke="#9a9a9a" stroke-width="1"/><path d="M0.5 9.5h9M0.5 12h9M5 9.5v5" stroke="#5f5f5f" stroke-width="1"/></svg>
<div class="a" style="left:22px;top:638px;width:61px;height:48px;background:rgba(235,235,235,0.45);box-sizing:border-box;border:1px solid rgba(170,170,170,0.6);border-radius:7px;"></div>
<div class="a" style="left:25px;top:641px;width:55px;height:43px;background:rgba(230,230,230,0.3);box-sizing:border-box;border:3px solid rgba(185,185,185,0.75);border-radius:5px;"></div>
<div class="a" style="left:41px;top:686px;width:20px;height:5px;box-sizing:border-box;border:1px solid rgba(170,170,170,0.6);border-top:none;border-radius:0 0 3px 3px;"></div>
<svg class="a" style="left:28px;top:642px;" width="30" height="30" viewBox="0 0 30 30"><path d="M6 6L24 24" stroke="rgba(175,175,175,0.9)" stroke-width="3"/><path d="M3.5 3.5h10L3.5 13.5z" fill="rgba(175,175,175,0.9)"/></svg>
<svg class="a" style="left:28px;top:672px;" width="50" height="10" viewBox="0 0 50 10"><path d="M6 1L2 5l4 4zM43 1l4 4-4 4z" fill="rgba(190,190,190,0.6)"/></svg>
<svg class="a" style="left:0;top:0" width="829" height="712" viewBox="0 0 829 712"><g fill="none" stroke-linejoin="round" stroke-linecap="square"><path d="M98.3 654.1H106.4Q111.4 654.1 111.4 659.1V666.5Q111.4 671.5 106.4 671.5H98.3Q93.3 671.5 93.3 666.5V659.1Q93.3 654.1 98.3 654.1Z M138.6 654.1H124.1Q119.6 654.1 119.6 658.5V658.4Q119.6 662.8 124.1 662.8H131.6Q136.1 662.8 136.1 667.2V667.1Q136.1 671.5 131.6 671.5H117.2" stroke="#d0d0d0" stroke-width="7" opacity="0.35"/><path d="M98.3 654.1H106.4Q111.4 654.1 111.4 659.1V666.5Q111.4 671.5 106.4 671.5H98.3Q93.3 671.5 93.3 666.5V659.1Q93.3 654.1 98.3 654.1Z M138.6 654.1H124.1Q119.6 654.1 119.6 658.5V658.4Q119.6 662.8 124.1 662.8H131.6Q136.1 662.8 136.1 667.2V667.1Q136.1 671.5 131.6 671.5H117.2" stroke="#f7a9b9" stroke-width="5.6" opacity="0.68"/><g opacity="0.85"><path d="M154.4 654.4V671.5M171.9 654.4V671.5M154.4 663H171.9 M189.2 671.5H183.5Q180.6 671.5 180.6 668.6V662Q180.6 659.1 183.5 659.1H186.3Q189.2 659.1 189.2 662V665.3H180.6 M201.2 654.4V671.5 M211.9 659.1V675.7M211.9 659.1H221.4Q224.3 659.1 224.3 662V668.6Q224.3 671.5 221.4 671.5H211.9 M241.6 671.5H234.2Q231.3 671.5 231.3 668.6V662Q231.3 659.1 234.2 659.1H238.7Q241.6 659.1 241.6 662V665.3H231.3 M252.4 671.5V662Q252.4 659.1 255.3 659.1H262.7" stroke="#a4a4a4" stroke-width="6.4"/><path d="M154.4 654.4V671.5M171.9 654.4V671.5M154.4 663H171.9 M189.2 671.5H183.5Q180.6 671.5 180.6 668.6V662Q180.6 659.1 183.5 659.1H186.3Q189.2 659.1 189.2 662V665.3H180.6 M201.2 654.4V671.5 M211.9 659.1V675.7M211.9 659.1H221.4Q224.3 659.1 224.3 662V668.6Q224.3 671.5 221.4 671.5H211.9 M241.6 671.5H234.2Q231.3 671.5 231.3 668.6V662Q231.3 659.1 234.2 659.1H238.7Q241.6 659.1 241.6 662V665.3H231.3 M252.4 671.5V662Q252.4 659.1 255.3 659.1H262.7" stroke="#f6f6f6" stroke-width="4.4"/></g></g></svg>
</body></html>
